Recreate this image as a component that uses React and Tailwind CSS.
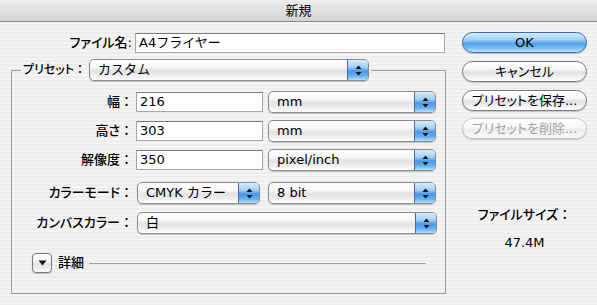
import React from 'react';

const Arrows = () => (
  <svg width="7" height="11" viewBox="0 0 7 11" className="block">
    <path d="M3.5 0.5 L6.5 4 L0.5 4 Z" fill="#111" />
    <path d="M3.5 10.5 L6.5 7 L0.5 7 Z" fill="#111" />
  </svg>
);

const Popup = ({ value, className }) => (
  <div
    className={`flex h-[22px] rounded-[5px] border border-[#8a8a8a] overflow-hidden shadow-[0_1px_1px_rgba(0,0,0,0.2)] bg-[linear-gradient(to_bottom,#ffffff_0%,#f8f8f8_35%,#e2e2e2_55%,#efefef_80%,#ffffff_100%)] ${className}`}
  >
    <div className="flex-1 flex items-center pl-[8px] text-[13px] text-black">{value}</div>
    <div className="w-[21px] flex items-center justify-center border-l border-[#3d6fb0] bg-[linear-gradient(to_bottom,#d6ecfd_0%,#a3cff5_35%,#4a97e4_55%,#66b2f2_80%,#b4dffc_100%)]">
      <Arrows />
    </div>
  </div>
);

const Field = ({ value, className }) => (
  <div
    className={`h-[20px] bg-white border border-[#a6a6a6] border-t-[#7a7a7a] flex items-center pl-[3px] text-[13px] text-black ${className}`}
  >
    {value}
  </div>
);

// label with a full-width colon that keeps its own spacing
const Label = ({ text, colon = '：' }) => (
  <div className="w-[124px] pr-[3px] text-right text-[13px] font-medium text-black whitespace-nowrap">
    <span className="[font-feature-settings:'palt']">{text}</span>
    <span>{colon}</span>
  </div>
);

const Button = ({ children, primary, disabled }) => (
  <div
    className={`h-[21px] rounded-full flex items-center justify-center text-[13px] shadow-[0_1px_1px_rgba(0,0,0,0.2)] [font-feature-settings:'palt'] ${
      primary
        ? 'border border-[#3b6aa6] text-black bg-[linear-gradient(to_bottom,#d8ecfd_0%,#a4d0f6_35%,#55a0e8_55%,#78bdf4_80%,#c2e6fd_100%)]'
        : disabled
        ? 'border border-[#c4c4c4] text-[#a3a3a3] bg-[linear-gradient(to_bottom,#ffffff_0%,#f7f7f7_45%,#ececec_55%,#fafafa_100%)]'
        : 'border border-[#7c7c7c] text-black bg-[linear-gradient(to_bottom,#ffffff_0%,#f8f8f8_35%,#e2e2e2_55%,#f1f1f1_80%,#ffffff_100%)]'
    }`}
  >
    {children}
  </div>
);

export default function App() {
  return (
    <div className="w-[597px] h-[305px] overflow-hidden [font-family:'DejaVu_Sans','Noto_Sans_CJK_JP',sans-serif] bg-[repeating-linear-gradient(to_bottom,#ededed_0px,#ededed_2px,#f4f4f4_2px,#f4f4f4_4px)]">
      {/* title bar */}
      <div className="h-[22px] rounded-t-[5px] border-b border-[#8c8c8c] bg-[linear-gradient(to_bottom,#eeeeee,#d2d2d2)] flex items-center justify-center text-[13px] text-black">
        新規
      </div>

      <div className="flex">
        {/* left column */}
        <div className="w-[446px] pl-[11px] pt-[11px]">
          <div className="flex items-center h-[20px]">
            <Label text="ファイル名" colon=":" />
            <Field value="A4フライヤー" className="w-[310px]" />
          </div>

          <fieldset className="mt-[6px] w-[435px] h-[235px] border border-[#9c9c9c]">
            <legend className="ml-[9px] px-[2px] flex items-center">
              <span className="text-[12px] font-medium text-black pr-[3px] whitespace-nowrap">
                <span className="[font-feature-settings:'palt']">プリセット</span>：
              </span>
              <Popup value="カスタム" className="w-[280px]" />
            </legend>

            <div className="pt-[10px] flex flex-col">
              <div className="flex items-center h-[22px]">
                <Label text="幅" />
                <Field value="216" className="w-[127px]" />
                <Popup value="mm" className="w-[168px] ml-[5px]" />
              </div>
              <div className="flex items-center h-[22px] mt-[7px]">
                <Label text="高さ" />
                <Field value="303" className="w-[127px]" />
                <Popup value="mm" className="w-[168px] ml-[5px]" />
              </div>
              <div className="flex items-center h-[22px] mt-[7px]">
                <Label text="解像度" />
                <Field value="350" className="w-[127px]" />
                <Popup value="pixel/inch" className="w-[168px] ml-[5px]" />
              </div>
              <div className="flex items-center h-[22px] mt-[11px]">
                <Label text="カラーモード" />
                <Popup value="CMYK カラー" className="w-[123px] ml-[1px]" />
                <Popup value="8 bit" className="w-[168px] ml-[8px]" />
              </div>
              <div className="flex items-center h-[22px] mt-[8px]">
                <Label text="カンバスカラー" />
                <Popup value="白" className="w-[300px] ml-[1px]" />
              </div>

              <div className="flex items-center h-[20px] mt-[19px] pl-[20px]">
                <div className="w-[20px] h-[20px] rounded-[4px] border border-[#7a7a7a] flex items-center justify-center shadow-[0_1px_1px_rgba(0,0,0,0.2)] bg-[linear-gradient(to_bottom,#ffffff_0%,#f2f2f2_45%,#e2e2e2_55%,#fafafa_100%)]">
                  <svg width="9" height="6" viewBox="0 0 9 6">
                    <path d="M0.5 0.5 L8.5 0.5 L4.5 5.5 Z" fill="#111" />
                  </svg>
                </div>
                <span className="ml-[6px] text-[13px] font-medium text-black">詳細</span>
                <div className="ml-[5px] w-[337px] h-0 border-t border-[#a0a0a0]" />
              </div>
            </div>
          </fieldset>
        </div>

        {/* right column */}
        <div className="ml-[16px] w-[125px] pt-[10px] flex flex-col">
          <Button primary>OK</Button>
          <div className="mt-[8px]">
            <Button>キャンセル</Button>
          </div>
          <div className="mt-[8px]">
            <Button>プリセットを保存...</Button>
          </div>
          <div className="mt-[7px]">
            <Button disabled>プリセットを削除...</Button>
          </div>
          <div className="mt-[66px] flex flex-col items-center text-[13px] text-black">
            <span className="font-medium whitespace-nowrap">
              <span className="[font-feature-settings:'palt']">ファイルサイズ</span>：
            </span>
            <span className="mt-[8px]">47.4M</span>
          </div>
        </div>
      </div>
    </div>
  );
}
